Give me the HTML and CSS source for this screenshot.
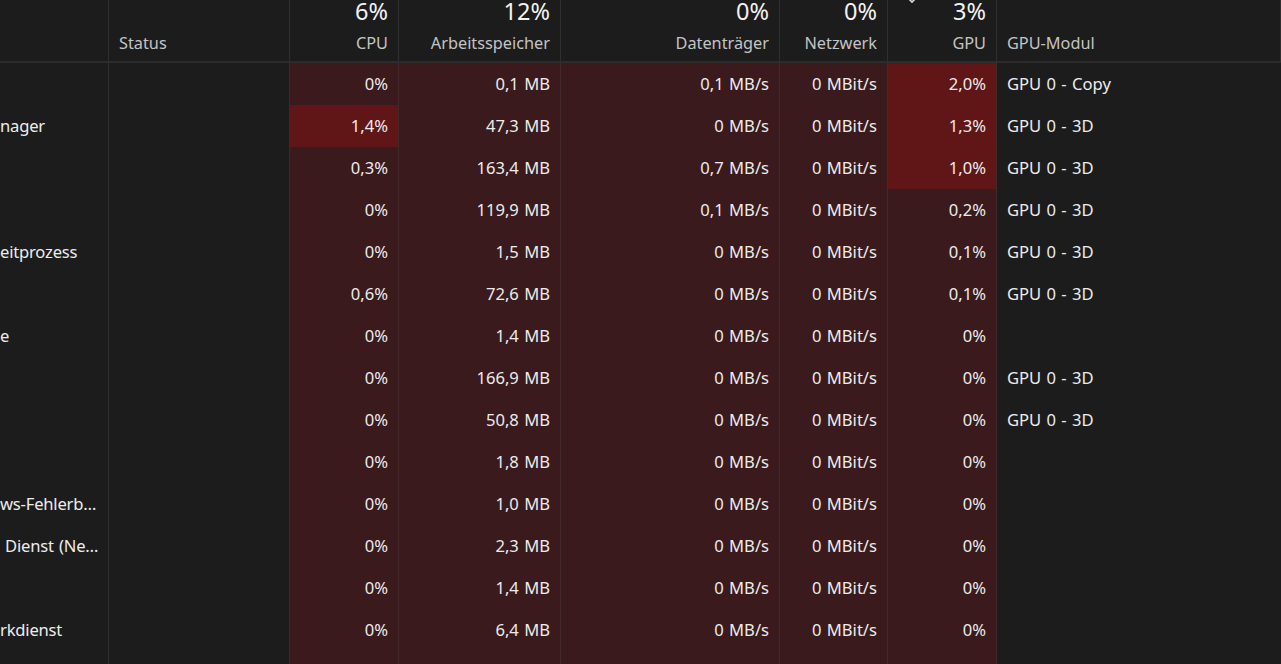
FILE: index.html
```html
<!DOCTYPE html>
<html lang="de">
<head>
<meta charset="utf-8">
<link rel="stylesheet" href="styles.css">
</head>
<body>
<div class="table">
  <div class="hcell"></div>
  <div class="hcell left"><span class="pct"></span><span class="lbl">Status</span></div>
  <div class="hcell"><span class="pct">6%</span><span class="lbl">CPU</span></div>
  <div class="hcell"><span class="pct">12%</span><span class="lbl">Arbeitsspeicher</span></div>
  <div class="hcell"><span class="pct">0%</span><span class="lbl">Datenträger</span></div>
  <div class="hcell"><span class="pct">0%</span><span class="lbl">Netzwerk</span></div>
  <div class="hcell sorted"><svg class="chev" width="14" height="8" viewBox="0 0 14 8"><path d="M2 -3 L7 2 L12 -3" fill="none" stroke="#d8d8d8" stroke-width="1.6"/></svg><span class="pct">3%</span><span class="lbl">GPU</span></div>
  <div class="hcell left"><span class="pct"></span><span class="lbl">GPU-Modul</span></div>

  <div class="c name"></div><div class="c"></div><div class="c h">0%</div><div class="c h">0,1 MB</div><div class="c h">0,1 MB/s</div><div class="c h">0 MBit/s</div><div class="c hh">2,0%</div><div class="c mod">GPU 0 - Copy</div>
  <div class="c name">nager</div><div class="c"></div><div class="c hh">1,4%</div><div class="c h">47,3 MB</div><div class="c h">0 MB/s</div><div class="c h">0 MBit/s</div><div class="c hh">1,3%</div><div class="c mod">GPU 0 - 3D</div>
  <div class="c name"></div><div class="c"></div><div class="c h">0,3%</div><div class="c h">163,4 MB</div><div class="c h">0,7 MB/s</div><div class="c h">0 MBit/s</div><div class="c hh">1,0%</div><div class="c mod">GPU 0 - 3D</div>
  <div class="c name"></div><div class="c"></div><div class="c h">0%</div><div class="c h">119,9 MB</div><div class="c h">0,1 MB/s</div><div class="c h">0 MBit/s</div><div class="c h">0,2%</div><div class="c mod">GPU 0 - 3D</div>
  <div class="c name">eitprozess</div><div class="c"></div><div class="c h">0%</div><div class="c h">1,5 MB</div><div class="c h">0 MB/s</div><div class="c h">0 MBit/s</div><div class="c h">0,1%</div><div class="c mod">GPU 0 - 3D</div>
  <div class="c name"></div><div class="c"></div><div class="c h">0,6%</div><div class="c h">72,6 MB</div><div class="c h">0 MB/s</div><div class="c h">0 MBit/s</div><div class="c h">0,1%</div><div class="c mod">GPU 0 - 3D</div>
  <div class="c name">e</div><div class="c"></div><div class="c h">0%</div><div class="c h">1,4 MB</div><div class="c h">0 MB/s</div><div class="c h">0 MBit/s</div><div class="c h">0%</div><div class="c mod"></div>
  <div class="c name"></div><div class="c"></div><div class="c h">0%</div><div class="c h">166,9 MB</div><div class="c h">0 MB/s</div><div class="c h">0 MBit/s</div><div class="c h">0%</div><div class="c mod">GPU 0 - 3D</div>
  <div class="c name"></div><div class="c"></div><div class="c h">0%</div><div class="c h">50,8 MB</div><div class="c h">0 MB/s</div><div class="c h">0 MBit/s</div><div class="c h">0%</div><div class="c mod">GPU 0 - 3D</div>
  <div class="c name"></div><div class="c"></div><div class="c h">0%</div><div class="c h">1,8 MB</div><div class="c h">0 MB/s</div><div class="c h">0 MBit/s</div><div class="c h">0%</div><div class="c mod"></div>
  <div class="c name">ws-Fehlerb…</div><div class="c"></div><div class="c h">0%</div><div class="c h">1,0 MB</div><div class="c h">0 MB/s</div><div class="c h">0 MBit/s</div><div class="c h">0%</div><div class="c mod"></div>
  <div class="c name">&nbsp;Dienst (Ne…</div><div class="c"></div><div class="c h">0%</div><div class="c h">2,3 MB</div><div class="c h">0 MB/s</div><div class="c h">0 MBit/s</div><div class="c h">0%</div><div class="c mod"></div>
  <div class="c name"></div><div class="c"></div><div class="c h">0%</div><div class="c h">1,4 MB</div><div class="c h">0 MB/s</div><div class="c h">0 MBit/s</div><div class="c h">0%</div><div class="c mod"></div>
  <div class="c name">rkdienst</div><div class="c"></div><div class="c h">0%</div><div class="c h">6,4 MB</div><div class="c h">0 MB/s</div><div class="c h">0 MBit/s</div><div class="c h">0%</div><div class="c mod"></div>
  <div class="c name"></div><div class="c"></div><div class="c h"></div><div class="c h"></div><div class="c h"></div><div class="c h"></div><div class="c h"></div><div class="c mod"></div>
</div>
</body>
</html>
```

FILE: styles.css
```css
html, body {
  margin: 0;
  padding: 0;
  background: #1c1c1c;
  overflow: hidden;
}
body {
  width: 1281px;
  height: 664px;
  font-family: "Noto Sans", "Open Sans", sans-serif;
  color: #ececec;
}
.table {
  display: grid;
  grid-template-columns: 109px 181px 109px 162px 219px 108px 109px 1fr;
  grid-auto-rows: 42px;
  grid-template-rows: 63px;
}
.hcell {
  position: relative;
  display: flex;
  flex-direction: column;
  align-items: flex-end;
  padding-right: 10px;
  border-right: 1px solid #2f2f2f;
  border-bottom: 2px solid #2c2c2c;
  box-sizing: border-box;
}
.hcell.left {
  align-items: flex-start;
  padding-left: 10px;
}
.hcell:last-child { border-right: none; }
.pct {
  height: 25px;
  font-size: 23.5px;
  line-height: 25px;
  color: #f2f2f2;
  margin-top: -1px;
}
.lbl {
  margin-top: 8px;
  font-size: 16.3px;
  line-height: 22px;
  color: #c4c4c4;
}
.chev {
  position: absolute;
  left: 17px;
  top: 0;
}
.c {
  display: flex;
  align-items: center;
  justify-content: flex-end;
  padding-right: 10px;
  padding-bottom: 2px;
  border-right: 1px solid #2f2f2f;
  font-size: 16.6px;
  word-spacing: 1px;
  white-space: nowrap;
  overflow: hidden;
  box-sizing: border-box;
}
.c.name {
  justify-content: flex-start;
  padding-left: 0;
  padding-right: 0;
  letter-spacing: -0.2px;
}
.c.h {
  background: #3a1a1c;
  border-right-color: #44292b;
}
.c.hh {
  background: #601616;
  border-right-color: #44292b;
}
.c.mod {
  justify-content: flex-start;
  padding-left: 10px;
  border-right: none;
}
```
